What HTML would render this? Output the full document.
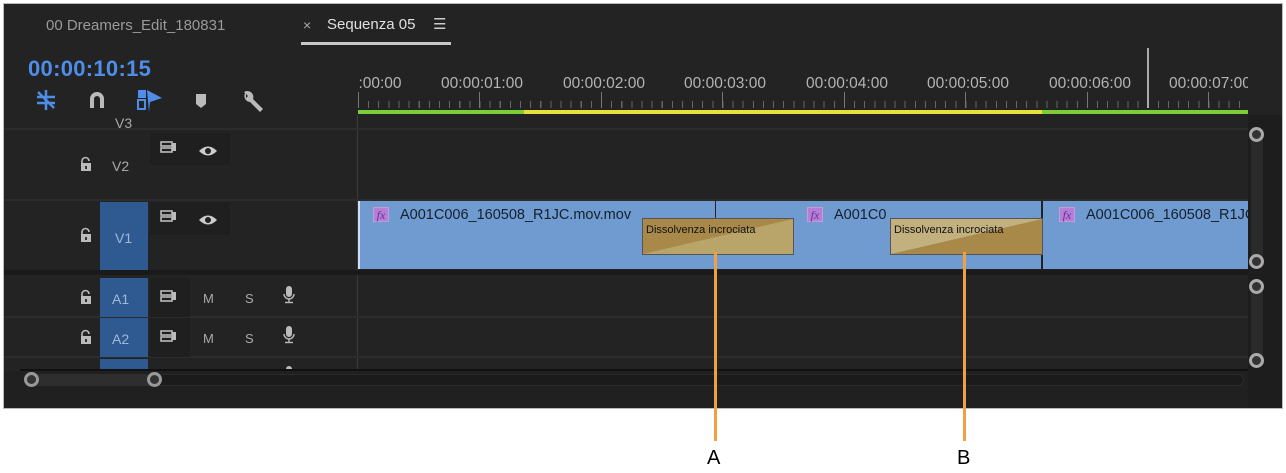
<!DOCTYPE html>
<html><head><meta charset="utf-8"><style>
*{margin:0;padding:0;box-sizing:border-box}
body{width:1286px;height:473px;background:#fff;position:relative;overflow:hidden;font-family:"Liberation Sans",sans-serif}
.a{position:absolute}
#p{left:4px;top:4px;width:1278px;height:404px;background:#232323;overflow:hidden;box-shadow:0 0 0 1px #bbb}
.t{color:#bdbdbd;font-size:14px;white-space:nowrap}
.rl{position:absolute;top:71px;color:#b4b4b4;font-size:15.5px;transform:translateX(-50%);white-space:nowrap}
.mj{position:absolute;top:88px;width:1px;height:16px;background:#777}
.sep{position:absolute;left:0;height:2px;background:#2c2c2c}
.ic{position:absolute;background:#1f1f1f}
.blk{position:absolute;left:96px;width:48px;background:#2f5a91}
.lab{position:absolute;color:#9fb8d8;font-size:14px}
.ml{color:#aaa;font-size:13px;position:absolute}
.clip{position:absolute;top:197px;height:68px;background:#6f9bd0}
.fx{position:absolute;width:16px;height:15px;background:#b57fd6;color:#6a2f9a;font-size:12px;font-style:italic;text-align:center;line-height:15px;font-family:"Liberation Serif",serif;border:1px solid #c79ae0}
.cn{position:absolute;color:#15202e;font-size:14.5px;white-space:nowrap}
.tr{position:absolute;height:37px;border:1px solid #555;overflow:hidden}
.tr span{position:absolute;left:3px;top:5px;font-size:11px;color:#111;white-space:nowrap}
.or{position:absolute;width:3px;background:#f0a040}
</style></head><body>
<div id="p" class="a">
 <div class="a t" style="left:42px;top:13px;color:#9a9a9a;font-size:15px">00 Dreamers_Edit_180831</div>
 <div class="a t" style="left:299px;top:13px;color:#aaa;font-size:14px">×</div>
 <div class="a t" style="left:323px;top:12px;color:#e0e0e0;font-size:15px">Sequenza 05</div>
 <div class="a t" style="left:429px;top:11px;color:#ccc;font-size:15px">☰</div>
 <div class="a" style="left:297px;top:38px;width:150px;height:3px;background:#c8c8c8"></div>
 <div class="a" style="left:24px;top:52px;color:#4e8ee8;font-size:22px;font-weight:bold;letter-spacing:0.3px">00:00:10:15</div>
 <svg class="a" style="left:30px;top:84px" width="240" height="26">
  <g stroke="#4e8ee8" stroke-width="2.5" fill="none"><line x1="4" y1="4" x2="20" y2="20"/><line x1="12" y1="2" x2="12" y2="22"/><line x1="3" y1="9" x2="21" y2="9"/><line x1="3" y1="15" x2="21" y2="15"/></g>
  <path d="M56 20 V11 a7 7 0 0 1 14 0 V20 h-4 V11 a3 3 0 0 0 -6 0 V20z" fill="#bbb"/>
  <rect x="104" y="2" width="8" height="8" fill="#4e8ee8"/><rect x="104" y="12" width="7" height="9" fill="none" stroke="#4e8ee8" stroke-width="2"/><path d="M113 2 L128 10 L116 14 L115 24z" fill="#4e8ee8"/>
  <path d="M162 6 h10 v10 l-5 4 l-5 -4z" fill="#bbb"/>
  <path d="M212 4 a6 6 0 0 0 4 10 l10 10 l3 -3 l-10 -10 a6 6 0 0 0 -9 -7 l4 4 l-2 2z" fill="#bbb"/>
 </svg>
 <div class="rl" style="left:376px">:00:00</div>
 <div class="rl" style="left:478px">00:00:01:00</div>
 <div class="rl" style="left:600px">00:00:02:00</div>
 <div class="rl" style="left:721px">00:00:03:00</div>
 <div class="rl" style="left:843px">00:00:04:00</div>
 <div class="rl" style="left:964px">00:00:05:00</div>
 <div class="rl" style="left:1086px">00:00:06:00</div>
 <div class="a" style="left:1165px;top:71px;width:79px;overflow:hidden;color:#b4b4b4;font-size:15.5px;white-space:nowrap">00:00:07:00</div>
 <div class="a" style="left:354px;top:97px;width:890px;height:7px;background:repeating-linear-gradient(90deg,#666 0 1px,transparent 1px 10.125px)"></div>
 <div class="mj" style="left:354px"></div><div class="mj" style="left:475px"></div><div class="mj" style="left:597px"></div><div class="mj" style="left:718px"></div><div class="mj" style="left:840px"></div><div class="mj" style="left:961px"></div><div class="mj" style="left:1083px"></div><div class="mj" style="left:1204px"></div>
 <div class="a" style="left:1143px;top:44px;width:2px;height:60px;background:#aaa"></div>
 <div class="a" style="left:354px;top:106px;width:166px;height:4px;background:#7ccd3c"></div>
 <div class="a" style="left:520px;top:106px;width:518px;height:4px;background:#e6df3c"></div>
 <div class="a" style="left:1038px;top:106px;width:206px;height:4px;background:#7ccd3c"></div>
 <div class="a" style="left:353px;top:111px;width:1px;height:260px;background:#3a3a3a"></div>
 <div class="sep" style="top:124px;width:1244px"></div>
 <div class="sep" style="top:195px;width:1244px"></div>
 <div class="sep" style="top:266px;width:1244px;height:5px;background:#1a1a1a"></div>
 <div class="sep" style="top:312px;width:1244px"></div>
 <div class="sep" style="top:352px;width:1244px"></div>
 <div class="a" style="left:111px;top:111px;color:#aaa;font-size:14px;height:13px;overflow:hidden">V3<br></div>
 <div class="ic" style="left:146px;top:129px;width:80px;height:32px"></div>
 <div class="lab" style="left:108px;top:154px;color:#aaa">V2</div>
 <div class="blk" style="top:198px;height:68px"></div>
 <div class="ic" style="left:146px;top:198px;width:80px;height:33px"></div>
 <div class="lab" style="left:111px;top:226px">V1</div>
 <div class="blk" style="top:274px;height:39px"></div>
 <div class="blk" style="top:314px;height:39px"></div>
 <div class="blk" style="top:355px;height:20px"></div>
 <div class="ic" style="left:146px;top:274px;width:40px;height:39px"></div>
 <div class="ic" style="left:146px;top:314px;width:40px;height:39px"></div>
 <div class="lab" style="left:108px;top:287px">A1</div>
 <div class="lab" style="left:108px;top:327px">A2</div>
 <div class="ml" style="left:199px;top:287px">M</div><div class="ml" style="left:241px;top:287px">S</div>
 <div class="ml" style="left:199px;top:327px">M</div><div class="ml" style="left:241px;top:327px">S</div>
 <svg class="a" style="left:0;top:0" width="360" height="380">
  <defs>
   <g id="lk"><path d="M1 6 V4 a3.5 3.5 0 0 1 7 0" fill="none" stroke="#bbb" stroke-width="1.6"/><rect x="0" y="6" width="10" height="8" fill="#bbb"/><rect x="4" y="9" width="2" height="3" fill="#333"/></g>
   <g id="to"><rect x="1" y="1" width="11" height="4" fill="none" stroke="#bbb" stroke-width="1.6"/><rect x="1" y="7" width="11" height="4" fill="none" stroke="#bbb" stroke-width="1.6"/><rect x="12" y="2" width="4" height="8" fill="#bbb"/></g>
   <g id="ey"><path d="M0 6 Q9 -3 18 6 Q9 15 0 6z" fill="#ccc"/><circle cx="9" cy="6" r="3" fill="#222"/></g>
   <g id="mc"><rect x="3" y="0" width="6" height="11" rx="3" fill="#bbb"/><path d="M1 8 a5 5 0 0 0 10 0" fill="none" stroke="#bbb" stroke-width="1.4"/><line x1="6" y1="13" x2="6" y2="16" stroke="#bbb" stroke-width="1.4"/><line x1="2" y1="16.5" x2="10" y2="16.5" stroke="#bbb" stroke-width="1.4"/></g>
  </defs>
  <use href="#lk" x="77" y="153"/><use href="#lk" x="77" y="224"/><use href="#lk" x="77" y="286"/><use href="#lk" x="77" y="326"/>
  <use href="#to" x="156" y="137"/><use href="#to" x="156" y="206"/><use href="#to" x="156" y="286"/><use href="#to" x="156" y="326"/><use href="#to" x="156" y="366"/>
  <use href="#ey" x="195" y="141"/><use href="#ey" x="195" y="210"/>
  <use href="#mc" x="279" y="282"/><use href="#mc" x="279" y="322"/><use href="#mc" x="279" y="362"/>
 </svg>
 <div class="clip" style="left:354px;width:357px;border-left:2px solid #cfe0f5"></div>
 <div class="clip" style="left:712px;width:325px"></div>
 <div class="clip" style="left:1039px;width:205px;overflow:hidden"></div>
 <div class="fx" style="left:369px;top:203px">fx</div><div class="cn" style="left:396px;top:203px">A001C006_160508_R1JC.mov.mov</div>
 <div class="fx" style="left:803px;top:203px">fx</div><div class="cn" style="left:830px;top:203px">A001C0</div>
 <div class="fx" style="left:1055px;top:203px">fx</div><div class="cn" style="left:1082px;top:203px;width:162px;overflow:hidden">A001C006_160508_R1JC.</div>
 <div class="tr" style="left:638px;top:214px;width:152px;background:linear-gradient(to top left,#b9a46a 50%,#a8894a 50%)"><span>Dissolvenza incrociata</span></div>
 <div class="tr" style="left:886px;top:214px;width:153px;background:linear-gradient(to bottom right,#c2b07e 50%,#a8894a 50%)"><span>Dissolvenza incrociata</span></div>
 <div class="a" style="left:1244px;top:111px;width:34px;height:293px;background:#1d1d1d"></div>
 <div class="a" style="left:1247px;top:127px;width:12px;height:134px;background:#2a2a2a;border-radius:6px"></div>
 <div class="a" style="left:1247px;top:278px;width:12px;height:80px;background:#2a2a2a;border-radius:6px"></div>
 <div class="a" style="left:1245px;top:123px;width:15px;height:15px;border:3px solid #aaa;border-radius:50%;background:#333"></div>
 <div class="a" style="left:1245px;top:250px;width:15px;height:15px;border:3px solid #aaa;border-radius:50%;background:#333"></div>
 <div class="a" style="left:1245px;top:275px;width:15px;height:15px;border:3px solid #aaa;border-radius:50%;background:#333"></div>
 <div class="a" style="left:1245px;top:349px;width:15px;height:15px;border:3px solid #aaa;border-radius:50%;background:#333"></div>
 <div class="a" style="left:16px;top:365px;width:1228px;height:2px;background:#111"></div>
 <div class="a" style="left:0;top:367px;width:1244px;height:37px;background:#202020"></div>
 <div class="a" style="left:24px;top:370px;width:130px;height:12px;background:#2e2e2e;border-radius:6px"></div>
 <div class="a" style="left:150px;top:370px;width:1090px;height:12px;background:#1b1b1b;border-radius:6px;border:1px solid #2a2a2a"></div>
 <div class="a" style="left:20px;top:368px;width:15px;height:15px;border:3px solid #999;border-radius:50%;background:#333"></div>
 <div class="a" style="left:143px;top:368px;width:15px;height:15px;border:3px solid #999;border-radius:50%;background:#333"></div>
</div>
<div class="or" style="left:714px;top:252px;height:189px"></div>
<div class="or" style="left:963px;top:252px;height:189px"></div>
<div class="a" style="left:707px;top:447px;font-size:20px;color:#000">A</div>
<div class="a" style="left:957px;top:447px;font-size:20px;color:#000">B</div>
</body></html>
